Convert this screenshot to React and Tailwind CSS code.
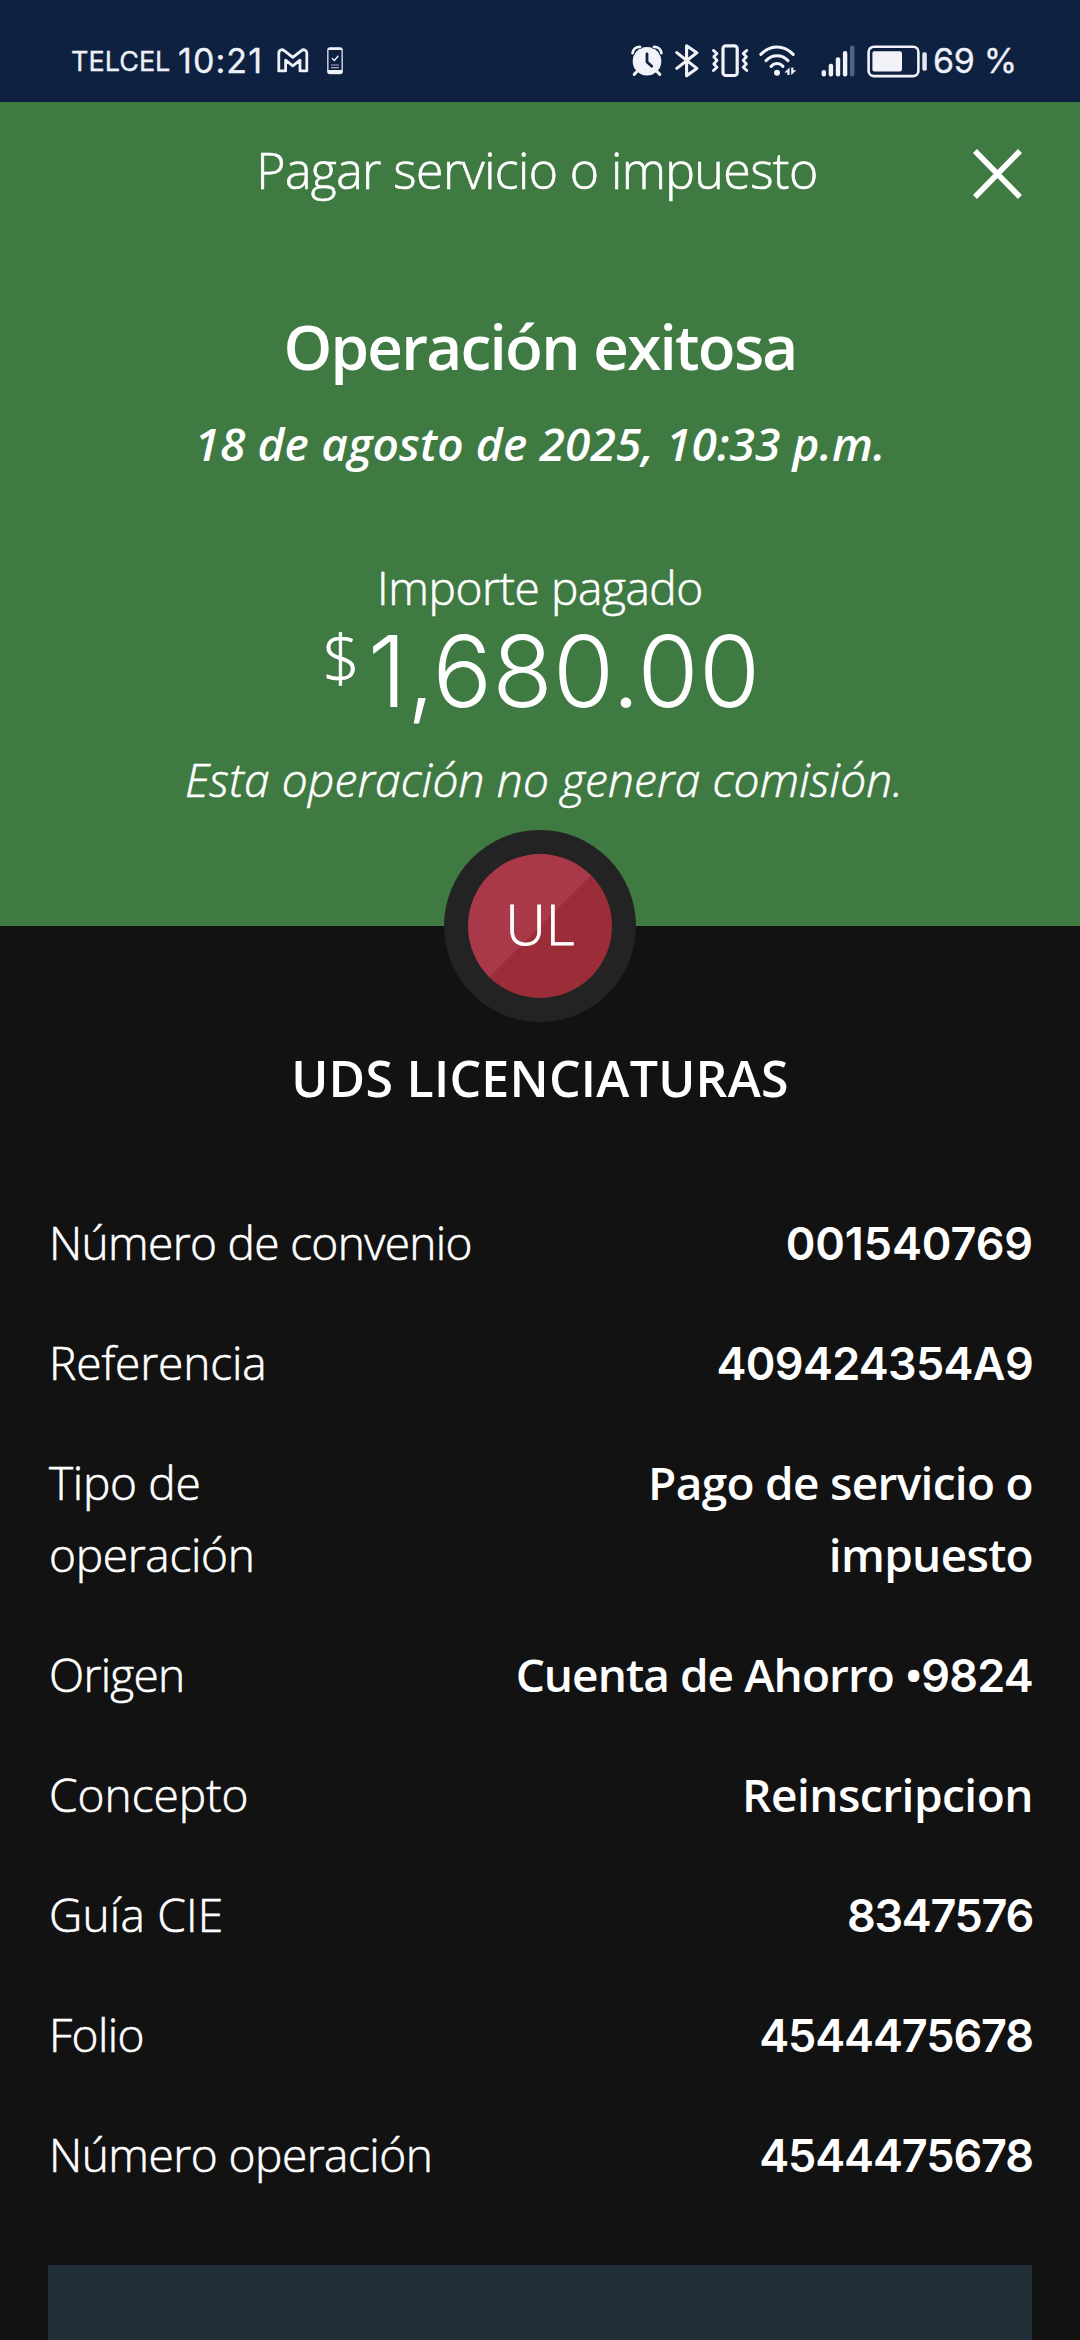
import React from 'react';
import clsx from 'clsx';

const NUMERIC = "font-['Inter',sans-serif] text-[45px] leading-[76px] h-[72px]";

const details = [
  { label: 'Número de convenio', labelClass: 'tracking-[-0.65px]', value: '001540769', valueClass: 'tracking-[-0.1px]', numeric: true },
  { label: 'Referencia', labelClass: 'tracking-[-0.1px]', value: '409424354A9', valueClass: 'tracking-[-0.7px]', numeric: true },
  {
    label: 'Tipo de operación',
    labelClass: 'w-[220px] tracking-[-0.3px]',
    value: 'Pago de servicio o impuesto',
    valueClass: 'w-[400px] tracking-[-0.7px]',
  },
  {
    label: 'Origen',
    labelClass: 'tracking-[-0.7px]',
    value: (
      <>
        Cuenta de Ahorro •<span className="font-['Inter',sans-serif] text-[45px] leading-none tracking-[-0.8px]">9824</span>
      </>
    ),
    valueClass: 'tracking-[-0.95px]',
  },
  { label: 'Concepto', labelClass: 'tracking-normal', value: 'Reinscripcion', valueClass: 'tracking-[-0.5px]' },
  { label: 'Guía CIE', labelClass: 'tracking-[0.2px]', value: '8347576', valueClass: 'tracking-[-1.3px]', numeric: true },
  { label: 'Folio', labelClass: 'tracking-[-0.6px]', value: '4544475678', valueClass: 'tracking-[-1.1px]', numeric: true },
  { label: 'Número operación', labelClass: 'tracking-[-0.5px]', value: '4544475678', valueClass: 'tracking-[-1.1px]', numeric: true },
];

function GmailIcon({ className }) {
  return (
    <svg className={className} width="32" height="25" viewBox="0 0 32 25" fill="none" stroke="#eef1f8" strokeWidth="2.8" strokeLinejoin="round">
      <path d="M1.8 22.9V5.2C1.8 2 5 .8 7.2 2.6L15.8 9.3L24.4 2.6C26.6.8 29.8 2 29.8 5.2V22.9H23V12.2L15.8 17.8L8.6 12.2V22.9Z" />
    </svg>
  );
}

function PhoneCheckIcon({ className }) {
  return (
    <svg className={className} width="16" height="28" viewBox="0 0 16 28" fill="none">
      <rect x="0.8" y="1" width="14.4" height="25.4" rx="2.2" stroke="#b9c1d2" strokeWidth="1.6" />
      <path d="M1 3V2.4Q1.2.6 3 .6H13Q14.8.6 15 2.4V3Z" fill="#eef1f8" />
      <path d="M.4 23H15.6V24.6Q15.6 27 13.2 27H2.8Q.4 27 .4 24.6Z" fill="#eef1f8" />
      <path d="M5 11.2L7.4 13.4L11.4 8.8" stroke="#eef1f8" strokeWidth="1.4" />
      <path d="M4 18H12M4 20.6H12" stroke="#a4aec2" strokeWidth="1.2" />
    </svg>
  );
}

function AlarmIcon({ className }) {
  return (
    <svg className={className} width="32" height="32" viewBox="0 0 32 32" fill="none" strokeLinecap="round">
      <circle cx="16" cy="16.2" r="14.3" fill="#f1f3f8" />
      <path d="M1.6 8.2C2 4.6 5 1.8 9 1.9M30.4 8.2C30 4.6 27 1.8 23 1.9" stroke="#0f2140" strokeWidth="4.4" />
      <path d="M1.6 8.2C2 4.6 5 1.8 9 1.9M30.4 8.2C30 4.6 27 1.8 23 1.9" stroke="#f1f3f8" strokeWidth="2.8" />
      <path d="M6 26.5L3.2 29.4M26 26.5L28.8 29.4" stroke="#f1f3f8" strokeWidth="3" />
      <path d="M16 9V17L20.8 21.2" stroke="#0f2140" strokeWidth="2.8" strokeLinejoin="round" />
    </svg>
  );
}

function BluetoothIcon({ className }) {
  return (
    <svg className={className} width="24" height="34" viewBox="0 0 24 34" fill="none" stroke="#f1f3f8" strokeWidth="3.1" strokeLinecap="round" strokeLinejoin="round">
      <path d="M1.8 8.6L21.8 24.4L11.6 31.8V1.8L21.8 8.8L1.8 24.4" />
    </svg>
  );
}

function VibrateIcon({ className }) {
  return (
    <svg className={className} width="38" height="34" viewBox="0 0 38 34" fill="none" stroke="#f1f3f8" strokeLinecap="round" strokeLinejoin="round">
      <rect x="12" y="1.9" width="14.2" height="29.6" rx="2.8" strokeWidth="3.2" />
      <path d="M2.4 6.4L6 9.6L2.8 12.8L6 16.4L2.8 20L6 23.2L2.4 26.6M35.8 6.4L32.2 9.6L35.4 12.8L32.2 16.4L35.4 20L32.2 23.2L35.8 26.6" strokeWidth="2.8" />
    </svg>
  );
}

function WifiIcon({ className }) {
  return (
    <svg className={className} width="38" height="32" viewBox="0 0 38 32" fill="none">
      <g stroke="#f1f3f8" strokeWidth="3" strokeLinecap="round">
        <path d="M1.8 9.4C11.2-.4 24.8-.4 34.2 9.4" />
        <path d="M7 15.6C13.4 9 22.6 9 29 15.6" />
        <path d="M12 21.4C15.6 17.6 20.4 17.6 24 21.4" />
      </g>
      <circle cx="18" cy="27.7" r="3" fill="#f1f3f8" />
      <path d="M30.6 30V22.4L25.4 27.4H28.4V30ZM32.2 22.4V30L37.4 25.2H34.4V22.4Z" fill="#f1f3f8" />
    </svg>
  );
}

function SignalIcon({ className }) {
  return (
    <svg className={className} width="34" height="32" viewBox="0 0 34 32" fill="#f1f3f8">
      <rect x="0.6" y="25" width="4.4" height="6.4" rx="2" />
      <rect x="7.7" y="18.7" width="4.4" height="12.7" rx="2" />
      <rect x="14.8" y="12.3" width="4.4" height="19.1" rx="2" />
      <rect x="21.9" y="6" width="4.4" height="25.4" rx="2" />
      <rect x="29" y="0.6" width="4.4" height="30.8" rx="2" fill="#56637e" />
    </svg>
  );
}

function BatteryIcon({ className }) {
  return (
    <svg className={className} width="60" height="33" viewBox="0 0 60 33" fill="none">
      <rect x="1.6" y="1.7" width="49.8" height="29.4" rx="5.4" stroke="#f1f3f8" strokeWidth="2.6" />
      <rect x="5.4" y="6.2" width="29.6" height="20.4" rx="2" fill="#f1f3f8" />
      <rect x="55.3" y="7.3" width="4.5" height="18.4" rx="1.6" fill="#e2e6ee" />
    </svg>
  );
}

function StatusBar() {
  return (
    <div className="h-[102px] pt-5 pl-[71px] flex items-center bg-[#0f2140] text-[#eef1f8] whitespace-nowrap font-['Inter',sans-serif]">
      <span className="w-[107px] text-[27px] leading-none [-webkit-text-stroke:0.3px]">TELCEL</span>
      <span className="w-[99px] text-[34px] leading-none tracking-[1.1px] [-webkit-text-stroke:0.3px]">10:21</span>
      <GmailIcon className="shrink-0 -mt-px" />
      <PhoneCheckIcon className="shrink-0 ml-[18px]" />
      <AlarmIcon className="shrink-0 ml-[288px]" />
      <BluetoothIcon className="shrink-0 ml-3" />
      <VibrateIcon className="shrink-0 ml-3" />
      <WifiIcon className="shrink-0 ml-[10px]" />
      <SignalIcon className="shrink-0 ml-6" />
      <BatteryIcon className="shrink-0 ml-3" />
      <span className="ml-[6px] text-[34px] leading-none tracking-[-0.3px] [-webkit-text-stroke:0.3px]">69 %</span>
    </div>
  );
}

function Summary() {
  return (
    <div className="h-[824px] bg-[#407a43] text-center whitespace-nowrap">
      <div className="h-36 flex items-center">
        <h1 className="flex-1 pl-[101px] pb-[9px] text-[50px] leading-[72px] font-light tracking-[-0.6px] [-webkit-text-stroke:0.6px]">
          Pagar servicio o impuesto
        </h1>
        <button className="mr-[58px]" aria-label="Cerrar">
          <svg width="49" height="50" viewBox="0 0 49 50" stroke="#fff" strokeWidth="5.6">
            <path d="M2 2L47 48M47 2L2 48" />
          </svg>
        </button>
      </div>
      <h2 className="mt-[60px] text-[62px] leading-[80px] font-semibold tracking-[-1.75px]">Operación exitosa</h2>
      <p className="mt-[21px] text-[46px] leading-[72px] font-semibold italic tracking-[0.15px]">
        18 de agosto de 2025, 10:33 p.m.
      </p>
      <p className="mt-[72px] text-[46px] leading-[72px] font-light tracking-[-0.4px] [-webkit-text-stroke:0.6px]">Importe pagado</p>
      <div className="h-[90px] flex justify-center items-start pl-[3px] font-light">
        <span className="mt-[5px] mr-[8px] text-[65px] leading-[58px] [-webkit-text-stroke:0.7px]">$</span>
        <span className="mt-[3px] font-['Inter',sans-serif] text-[99px] leading-[90px] tracking-[0.2px]">1,680.00</span>
      </div>
      <p className="mt-[30px] pl-2 text-[46px] leading-[72px] font-light italic tracking-[0.2px] [-webkit-text-stroke:0.6px]">
        Esta operación no genera comisión.
      </p>
    </div>
  );
}

function Avatar({ initials }) {
  return (
    <div className="relative -mt-24 mx-auto size-48 rounded-full bg-[#232323] flex items-center justify-center">
      <div className="size-36 rounded-full bg-linear-135 from-[#a93848] from-50% to-[#9b2d38] to-50% flex items-center justify-center">
        <span className="text-[56px] leading-none font-light -mt-[6px] [-webkit-text-stroke:0.8px]">{initials}</span>
      </div>
    </div>
  );
}

function DetailRow({ label, labelClass, value, valueClass, numeric }) {
  return (
    <div className="flex justify-between text-[46px] leading-[72px]">
      <dt className={clsx('font-light [-webkit-text-stroke:0.6px]', labelClass)}>{label}</dt>
      <dd className={clsx('font-semibold text-right', numeric && NUMERIC, valueClass)}>{value}</dd>
    </div>
  );
}

export default function App() {
  return (
    <div className="w-[1080px] h-[2340px] overflow-hidden flex flex-col bg-[#121212] text-white font-['Open_Sans',sans-serif]">
      <StatusBar />
      <Summary />
      <Avatar initials="UL" />
      <p className="mt-5 text-center text-[50px] leading-[72px] font-semibold tracking-[0.25px]">UDS LICENCIATURAS</p>
      <dl className="mt-[92px] pl-[49px] pr-[47px] flex flex-col gap-12">
        {details.map((item) => (
          <DetailRow key={item.label} {...item} />
        ))}
      </dl>
      <div className="mt-[75px] mx-12 flex-1 bg-[#1f2e37]" />
    </div>
  );
}
